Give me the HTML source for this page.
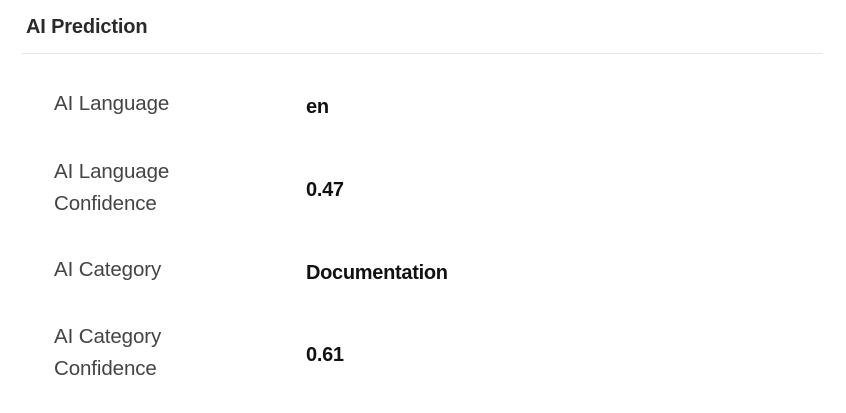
<!DOCTYPE html>
<html><head><style>
body{margin:0;background:#fff;width:846px;height:413px;overflow:hidden;font-family:"Liberation Sans",sans-serif;position:relative}
.t{position:absolute;left:26px;top:16px;font-size:20px;color:#2a2a2a;font-weight:bold;letter-spacing:-0.15px}
.hr{position:absolute;left:22px;width:801px;top:53px;height:1px;background:#e6e6e6}
.l{position:absolute;left:54px;font-size:20.5px;color:#444;line-height:31.5px;letter-spacing:-0.1px}
.v{position:absolute;left:306px;font-size:20px;font-weight:bold;color:#111;letter-spacing:-0.3px}
</style></head><body>
<div class="t">AI Prediction</div>
<div class="hr"></div>
<div class="l" style="top:88px">AI Language</div>
<div class="v" style="top:96px">en</div>
<div class="l" style="top:156px">AI Language<br>Confidence</div>
<div class="v" style="top:179px">0.47</div>
<div class="l" style="top:254px">AI Category</div>
<div class="v" style="top:262px">Documentation</div>
<div class="l" style="top:321px">AI Category<br>Confidence</div>
<div class="v" style="top:344px">0.61</div>
</body></html>
